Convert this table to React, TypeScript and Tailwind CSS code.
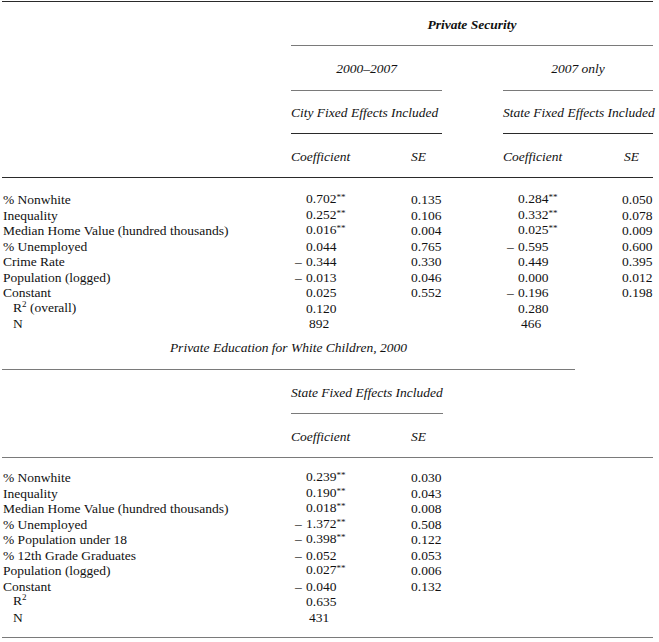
const dark = "bg-[#2a2a2a]";
const grey = "bg-[#7a7a7a]";

type Row = [string, string, string, string?, string?];

const securityRows: Row[] = [
  ["% Nonwhite", "0.702**", "0.135", "0.284**", "0.050"],
  ["Inequality", "0.252**", "0.106", "0.332**", "0.078"],
  ["Median Home Value (hundred thousands)", "0.016**", "0.004", "0.025**", "0.009"],
  ["% Unemployed", "0.044", "0.765", "-0.595", "0.600"],
  ["Crime Rate", "-0.344", "0.330", "0.449", "0.395"],
  ["Population (logged)", "-0.013", "0.046", "0.000", "0.012"],
  ["Constant", "0.025", "0.552", "-0.196", "0.198"],
  ["R2 (overall)", "0.120", "", "0.280", ""],
  ["N", "892", "", "466", ""],
];

const educationRows: Row[] = [
  ["% Nonwhite", "0.239**", "0.030"],
  ["Inequality", "0.190**", "0.043"],
  ["Median Home Value (hundred thousands)", "0.018**", "0.008"],
  ["% Unemployed", "-1.372**", "0.508"],
  ["% Population under 18", "-0.398**", "0.122"],
  ["% 12th Grade Graduates", "-0.052", "0.053"],
  ["Population (logged)", "0.027**", "0.006"],
  ["Constant", "-0.040", "0.132"],
  ["R2", "0.635", ""],
  ["N", "431", ""],
];

function Label({ text }: { text: string }) {
  if (text.startsWith("R2")) {
    return (
      <span className="pl-[11px]">
        R<span className="relative -top-[5px] text-[9px]">2</span>
        {text.slice(2)}
      </span>
    );
  }
  if (text === "N") return <span className="pl-[11px]">N</span>;
  return <span className="pl-[1px]">{text}</span>;
}

function Coef({ value, width }: { value?: string; width: string }) {
  const v = value ?? "";
  const neg = v.startsWith("-");
  const stars = v.endsWith("**");
  const num = v.replace("-", "").replace("**", "");
  const whole = num !== "" && !num.includes(".");
  return (
    <div className={`shrink-0 whitespace-nowrap pl-[4px] ${width}`}>
      <span className="inline-block w-[11px]">{neg ? "–" : ""}</span>
      <span className={whole ? "pl-[3px]" : ""}>{num}</span>
      {stars && <span className="relative -top-[3px] text-[9px]">**</span>}
    </div>
  );
}

function DataRow({ row, wide }: { row: Row; wide: boolean }) {
  return (
    <div className="flex h-[15.5px] items-center">
      <div className="w-[289px] shrink-0">
        <Label text={row[0]} />
      </div>
      <Coef value={row[1]} width="w-[120px]" />
      <div className="w-[92px] shrink-0">{row[2]}</div>
      {wide && (
        <>
          <Coef value={row[3]} width="w-[119px]" />
          <div className="w-[31px] shrink-0">{row[4]}</div>
        </>
      )}
    </div>
  );
}

export default function App() {
  return (
    <div className="min-h-[642px] w-[659px] bg-white pt-[1px] font-['Liberation_Serif','Times_New_Roman',serif] text-[13.5px] leading-[15.5px] text-[#111]">
      <div className="ml-[2px] w-[651px]">
        {/* Private Security */}
        <div className={`h-px ${dark}`} />
        <div className="flex h-[43px] items-center pt-[3px]">
          <div className="ml-[289px] flex-1 text-center font-bold italic">Private Security</div>
        </div>
        <div className={`ml-[289px] h-px ${grey}`} />
        <div className="flex h-[44px] items-center pt-[2px] italic">
          <div className="ml-[289px] w-[151px] text-center">2000–2007</div>
          <div className="ml-[61px] w-[150px] text-center">2007 only</div>
        </div>
        <div className="flex">
          <div className={`ml-[289px] h-px w-[151px] ${grey}`} />
          <div className={`ml-[61px] h-px w-[150px] ${grey}`} />
        </div>
        <div className="flex h-[42px] items-center pt-[2px] italic">
          <div className="ml-[289px] w-[212px] whitespace-nowrap">City Fixed Effects Included</div>
          <div className="w-[150px] whitespace-nowrap">State Fixed Effects Included</div>
        </div>
        <div className="flex">
          <div className={`ml-[289px] h-px w-[151px] ${dark}`} />
          <div className={`ml-[61px] h-px w-[150px] ${dark}`} />
        </div>
        <div className="flex h-[43px] items-center pt-[2px] italic">
          <div className="ml-[289px] w-[120px]">Coefficient</div>
          <div className="w-[92px]">SE</div>
          <div className="w-[121px]">Coefficient</div>
          <div>SE</div>
        </div>
        <div className={`h-px ${dark}`} />
        <div className="pt-[14px]">
          {securityRows.map((r) => (
            <DataRow key={r[0]} row={r} wide />
          ))}
        </div>

        {/* Private Education */}
        <div className="mt-[8px] h-[15.5px] w-[573px] text-center italic">
          Private Education for White Children, 2000
        </div>
        <div className={`mt-[14px] h-px w-[573px] ${grey}`} />
        <div className="flex h-[43px] items-center pt-[3px] italic">
          <div className="ml-[289px] whitespace-nowrap">State Fixed Effects Included</div>
        </div>
        <div className={`ml-[289px] h-px w-[152px] ${grey}`} />
        <div className="flex h-[43px] items-center pt-[2px] italic">
          <div className="ml-[289px] w-[120px]">Coefficient</div>
          <div>SE</div>
        </div>
        <div className={`h-px ${grey}`} />
        <div className="pt-[12px]">
          {educationRows.map((r) => (
            <DataRow key={r[0]} row={r} wide={false} />
          ))}
        </div>
        <div className={`mt-[12px] h-px ${grey}`} />
      </div>
    </div>
  );
}
